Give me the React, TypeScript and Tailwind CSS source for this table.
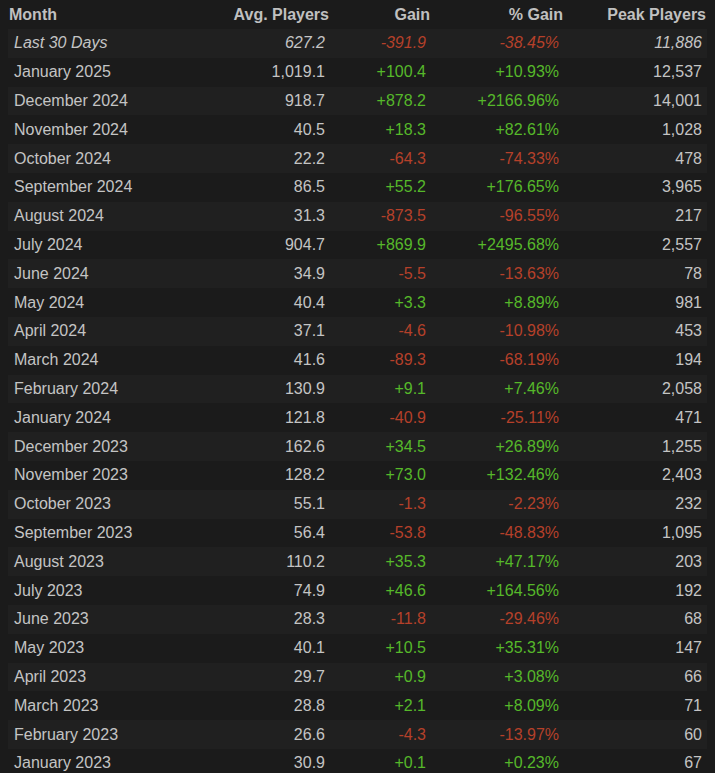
import React from "react";

interface Row {
  month: string;
  avg: string;
  gain: string;
  pct: string;
  peak: string;
}

const rows: Row[] = [
  { month: "Last 30 Days", avg: "627.2", gain: "-391.9", pct: "-38.45%", peak: "11,886" },
  { month: "January 2025", avg: "1,019.1", gain: "+100.4", pct: "+10.93%", peak: "12,537" },
  { month: "December 2024", avg: "918.7", gain: "+878.2", pct: "+2166.96%", peak: "14,001" },
  { month: "November 2024", avg: "40.5", gain: "+18.3", pct: "+82.61%", peak: "1,028" },
  { month: "October 2024", avg: "22.2", gain: "-64.3", pct: "-74.33%", peak: "478" },
  { month: "September 2024", avg: "86.5", gain: "+55.2", pct: "+176.65%", peak: "3,965" },
  { month: "August 2024", avg: "31.3", gain: "-873.5", pct: "-96.55%", peak: "217" },
  { month: "July 2024", avg: "904.7", gain: "+869.9", pct: "+2495.68%", peak: "2,557" },
  { month: "June 2024", avg: "34.9", gain: "-5.5", pct: "-13.63%", peak: "78" },
  { month: "May 2024", avg: "40.4", gain: "+3.3", pct: "+8.89%", peak: "981" },
  { month: "April 2024", avg: "37.1", gain: "-4.6", pct: "-10.98%", peak: "453" },
  { month: "March 2024", avg: "41.6", gain: "-89.3", pct: "-68.19%", peak: "194" },
  { month: "February 2024", avg: "130.9", gain: "+9.1", pct: "+7.46%", peak: "2,058" },
  { month: "January 2024", avg: "121.8", gain: "-40.9", pct: "-25.11%", peak: "471" },
  { month: "December 2023", avg: "162.6", gain: "+34.5", pct: "+26.89%", peak: "1,255" },
  { month: "November 2023", avg: "128.2", gain: "+73.0", pct: "+132.46%", peak: "2,403" },
  { month: "October 2023", avg: "55.1", gain: "-1.3", pct: "-2.23%", peak: "232" },
  { month: "September 2023", avg: "56.4", gain: "-53.8", pct: "-48.83%", peak: "1,095" },
  { month: "August 2023", avg: "110.2", gain: "+35.3", pct: "+47.17%", peak: "203" },
  { month: "July 2023", avg: "74.9", gain: "+46.6", pct: "+164.56%", peak: "192" },
  { month: "June 2023", avg: "28.3", gain: "-11.8", pct: "-29.46%", peak: "68" },
  { month: "May 2023", avg: "40.1", gain: "+10.5", pct: "+35.31%", peak: "147" },
  { month: "April 2023", avg: "29.7", gain: "+0.9", pct: "+3.08%", peak: "66" },
  { month: "March 2023", avg: "28.8", gain: "+2.1", pct: "+8.09%", peak: "71" },
  { month: "February 2023", avg: "26.6", gain: "-4.3", pct: "-13.97%", peak: "60" },
  { month: "January 2023", avg: "30.9", gain: "+0.1", pct: "+0.23%", peak: "67" },
];

const cols = "grid grid-cols-[190px_132px_101px_133px_143px]";

export default function App() {
  return (
    <div className="w-[715px] h-[773px] overflow-hidden bg-[#1b1b1b] px-2 pt-px font-['Liberation_Sans',Arial,sans-serif] text-[16px] text-[#c4c4c4]">
      <div className={`${cols} h-[28px] items-center font-bold text-[#c0c0c0]`}>
        <div className="pl-px">Month</div>
        <div className="text-right pr-px">Avg. Players</div>
        <div className="text-right pr-px">Gain</div>
        <div className="text-right pr-px">% Gain</div>
        <div className="text-right pr-px">Peak Players</div>
      </div>
      {rows.map((r, i) => {
        const up = r.gain.startsWith("+");
        const tone = up ? "text-[#56b82a]" : "text-[#b5402a]";
        return (
          <div
            key={r.month}
            className={`${cols} h-[28.8px] items-center ${i % 2 === 0 ? "bg-[#202020]" : ""} ${i === 0 ? "italic" : ""}`}
          >
            <div className="pl-1.5">{r.month}</div>
            <div className="text-right pr-[5px]">{r.avg}</div>
            <div className={`text-right pr-[5px] ${tone}`}>{r.gain}</div>
            <div className={`text-right pr-[5px] ${tone}`}>{r.pct}</div>
            <div className="text-right pr-[5px]">{r.peak}</div>
          </div>
        );
      })}
    </div>
  );
}
